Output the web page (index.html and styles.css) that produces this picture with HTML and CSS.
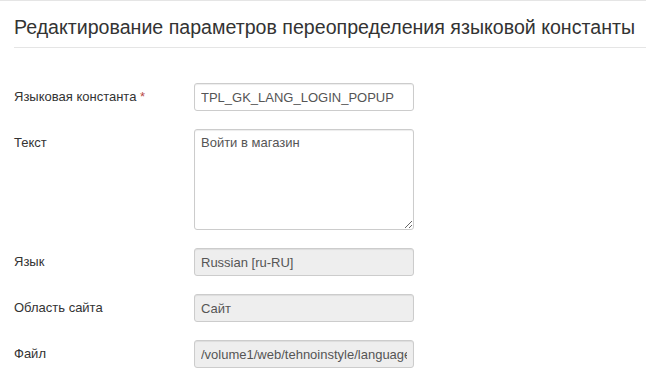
FILE: index.html
```html
<!DOCTYPE html>
<html lang="ru">
<head>
    <meta charset="UTF-8">
    <title>Редактирование параметров переопределения языковой константы</title>
    <link rel="stylesheet" href="styles.css">
</head>
<body>
   <div class="page-top"></div>
   <div class="edit-block">
       <h2 class="edit-block-title">Редактирование параметров переопределения языковой константы</h2>

       <div class="edit-block-form">
           <div class="edit-block-row">
               <label class="edit-block-label">Языковая константа <span class="star">*</span></label>
               <input class="edit-block-input" type="text" value="TPL_GK_LANG_LOGIN_POPUP">
           </div>
           <div class="edit-block-row">
               <label class="edit-block-label">Текст</label>
               <textarea class="edit-block-input edit-block-text">Войти в магазин</textarea>
           </div>
           <div class="edit-block-row">
               <label class="edit-block-label">Язык</label>
               <input class="edit-block-input" type="text" value="Russian [ru-RU]" disabled>
           </div>
           <div class="edit-block-row">
               <label class="edit-block-label">Область сайта</label>
               <input class="edit-block-input" type="text" value="Сайт" disabled>
           </div>
           <div class="edit-block-row">
               <label class="edit-block-label">Файл</label>
               <input class="edit-block-input" type="text" value="/volume1/web/tehnoinstyle/language/overrides/ru-RU.override.ini" disabled>
           </div>
       </div>
   </div>
</body>
</html>
```

FILE: styles.css
```css
        body{
            margin: 0;
            background: #fff;
            font-family: "Liberation Sans", Arial, sans-serif;
            font-size: 13px;
            color: #333;
        }

        .page-top{
            height: 1px;
            background: #e5e5e5;
        }

        .edit-block{
            padding-left: 14px;
        }

        .edit-block-title{
            margin: 0;
            padding: 16px 0 10px 0;
            font-size: 19.6px;
            font-weight: normal;
            line-height: 20px;
            white-space: nowrap;
            color: #333;
            border-bottom: 1px solid #e5e5e5;
        }

        .edit-block-form{
            padding-top: 35px;
        }

        .edit-block-row{
            display: flex;
            align-items: flex-start;
            margin-bottom: 18px;
        }

        .edit-block-label{
            width: 180px;
            line-height: 27px;
        }

        .edit-block-label>.star{
            color: #b94a48;
        }

        .edit-block-input{
            box-sizing: border-box;
            width: 220px;
            height: 28px;
            padding: 4px 6px;
            border: 1px solid #ccc;
            border-radius: 3px;
            box-shadow: inset 0 1px 1px rgba(0,0,0,.075);
            font-family: "Liberation Sans", Arial, sans-serif;
            font-size: 13px;
            color: #555;
            background: #fff;
            margin: 0;
        }

        .edit-block-input:disabled{
            background: #eee;
            color: #555;
        }

        .edit-block-text{
            height: 101px;
            resize: vertical;
            line-height: 18px;
        }
```
